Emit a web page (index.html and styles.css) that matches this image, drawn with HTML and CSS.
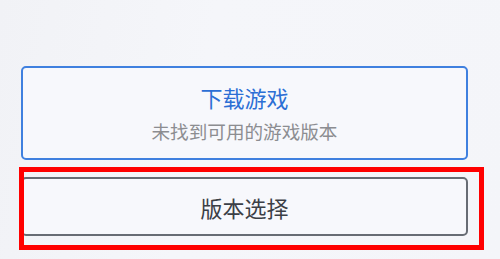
FILE: index.html
```html
<!DOCTYPE html>
<html lang="zh-CN">
<head>
<meta charset="utf-8">
<title>下载游戏</title>
<link rel="stylesheet" href="styles.css">
</head>
<body>
<div class="page">
  <div class="stack">
    <div class="card card-download">
      <div class="card-title">下载游戏</div>
      <div class="card-sub">未找到可用的游戏版本</div>
    </div>
    <div class="card card-version">
      <div class="card-label">版本选择</div>
    </div>
  </div>
  <div class="highlight"></div>
</div>
</body>
</html>
```
FILE: styles.css
```css
html, body {
  margin: 0;
  padding: 0;
}
body {
  width: 500px;
  height: 259px;
  overflow: hidden;
  background: linear-gradient(100deg, #f1f2f6 0%, #f5f6fa 40%, #f4f5f9 100%);
  font-family: "Noto Sans CJK SC", "Noto Sans", sans-serif;
}
.page {
  position: relative;
  width: 500px;
  height: 259px;
}
.stack {
  display: flex;
  flex-direction: column;
  gap: 17px;
  padding: 66px 0 0 21px;
  width: 447px;
}
.card {
  box-sizing: border-box;
  background: #f7f8fc;
  border-radius: 5px;
  display: flex;
  flex-direction: column;
  align-items: center;
}
.card-download {
  height: 94px;
  border: 2px solid #3f80df;
  padding-top: 14px;
}
.card-title {
  font-size: 22px;
  line-height: 30px;
  color: #2c6fd5;
}
.card-sub {
  margin-top: 6px;
  font-size: 18.6px;
  line-height: 26px;
  color: #8c8d91;
}
.card-version {
  height: 59px;
  border: 2px solid #676c74;
  justify-content: center;
}
.card-label {
  font-size: 22px;
  line-height: 30px;
  color: #3b3f46;
}
.highlight {
  position: absolute;
  left: 19px;
  top: 167px;
  width: 465px;
  height: 83px;
  box-sizing: border-box;
  border: 5px solid #ff0000;
}
```
